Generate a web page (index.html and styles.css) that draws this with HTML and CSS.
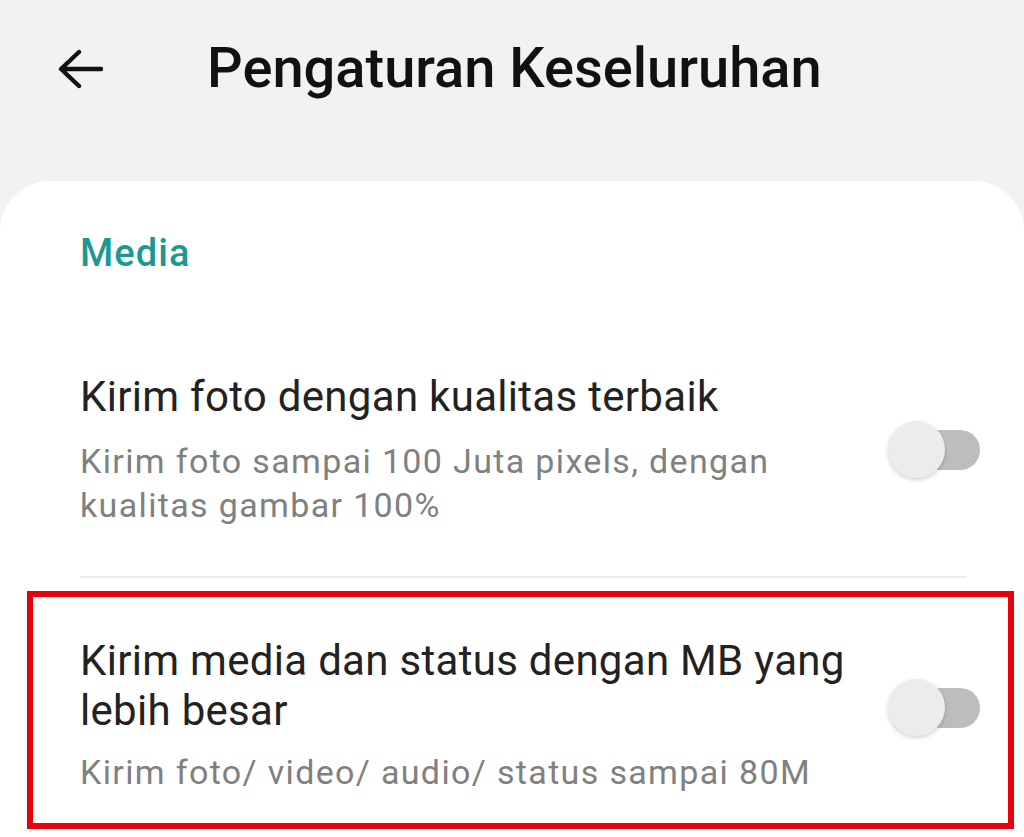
FILE: index.html
```html
<!DOCTYPE html>
<html lang="id">
<head>
<meta charset="utf-8">
<title>Pengaturan Keseluruhan</title>
<link rel="stylesheet" href="styles.css">
</head>
<body>
<header class="topbar">
  <svg class="back" viewBox="0 0 46 42" width="46" height="42" aria-hidden="true">
    <path d="M44 21 H5 M22 4 L4 21 L22 38" fill="none" stroke="#111" stroke-width="4.4" stroke-linecap="round" stroke-linejoin="round"/>
  </svg>
  <h1 class="title">Pengaturan Keseluruhan</h1>
</header>
<main class="card">
  <div class="section">Media</div>
  <div class="row">
    <div class="text">
      <div class="row-title">Kirim foto dengan kualitas terbaik</div>
      <div class="row-sub">Kirim foto sampai 100 Juta pixels, dengan<br>kualitas gambar 100%</div>
    </div>
    <div class="toggle"><span class="track"></span><span class="knob"></span></div>
  </div>
  <div class="divider"></div>
  <div class="highlight">
    <div class="row row-in">
      <div class="text">
        <div class="row-title">Kirim media dan status dengan MB yang<br>lebih besar</div>
        <div class="row-sub">Kirim foto/ video/ audio/ status sampai 80M</div>
      </div>
      <div class="toggle toggle-up"><span class="track"></span><span class="knob"></span></div>
    </div>
  </div>
</main>
</body>
</html>
```
FILE: styles.css
```css
html, body {
  margin: 0;
  padding: 0;
}
body {
  background: #f2f2f2;
  font-family: Roboto, "Noto Sans", "Liberation Sans", sans-serif;
  width: 1024px;
  height: 837px;
  overflow: hidden;
}
.topbar {
  height: 181px;
  display: flex;
  align-items: flex-start;
  box-sizing: border-box;
  padding: 47px 0 0 57px;
}
.back {
  display: block;
  margin-top: 1px;
}
.title {
  margin: -7px 0 0 104px;
  font-size: 56px;
  font-weight: 500;
  line-height: 1;
  color: #111;
  letter-spacing: 0;
}
.card {
  background: #fff;
  border-radius: 50px 50px 0 0;
  height: 656px;
  box-sizing: border-box;
  padding-top: 52px;
}
.section {
  padding-left: 80px;
  font-size: 38px;
  line-height: 40px;
  font-weight: 500;
  color: #1a9994;
  letter-spacing: 1.1px;
}
.row {
  display: flex;
  align-items: center;
  justify-content: space-between;
  padding: 99px 44px 49px 80px;
}
.row-title {
  font-size: 42px;
  line-height: 50px;
  color: #222;
  letter-spacing: 0.3px;
}
.row-sub {
  margin-top: 17px;
  font-size: 34px;
  line-height: 44px;
  color: #808080;
  letter-spacing: 1.35px;
}
.row-in .row-sub {
  margin-top: 14px;
}
.toggle {
  position: relative;
  width: 92px;
  height: 58px;
  flex: none;
}
.toggle-up {
  margin-top: -14px;
}
.track {
  position: absolute;
  right: 0;
  top: 9px;
  width: 76px;
  height: 40px;
  border-radius: 20px;
  background: #bdbdbd;
}
.knob {
  position: absolute;
  left: 0;
  top: 0;
  width: 57px;
  height: 57px;
  border-radius: 50%;
  background: #ececec;
  box-shadow: 0 2px 4px rgba(0,0,0,0.18);
}
.divider {
  height: 2px;
  background: #ececec;
  margin: 0 57px 0 80px;
}
.highlight {
  margin: 13px 10px 0 27px;
  border: 6px solid #e8000b;
}
.row-in {
  padding: 39px 28px 29px 47px;
}
```
